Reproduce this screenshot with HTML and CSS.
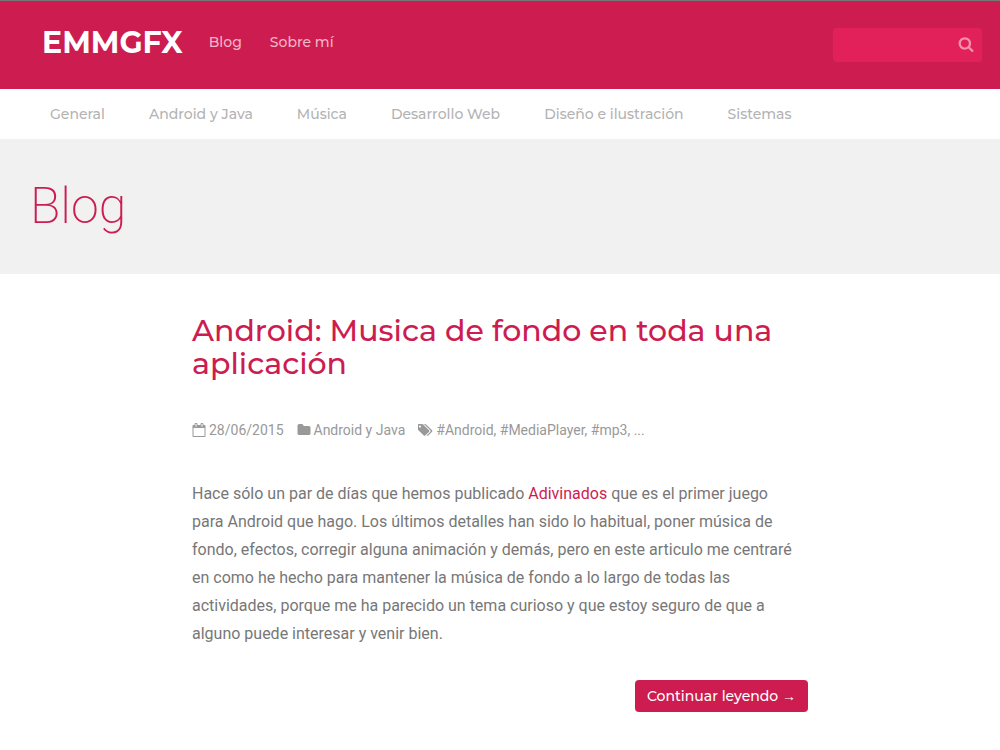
FILE: index.html
```html
<!DOCTYPE html>
<html lang="es">
<head>
<meta charset="utf-8">
<meta name="viewport" content="width=device-width, initial-scale=1">
<title>EMMGFX - Blog</title>
<link rel="stylesheet" href="styles.css">
</head>
<body>
<header class="site-header">
  <a class="brand" href="#">EMMGFX</a>
  <nav class="main-nav" aria-label="Principal">
    <a href="#">Blog</a>
    <a href="#">Sobre mí</a>
  </nav>
  <form class="search" role="search">
    <input class="search-input" type="search" aria-label="Buscar">
    <button class="search-button" type="submit" aria-label="Buscar">
      <svg class="icon" viewBox="0 0 1792 1792" aria-hidden="true"><path d="M1216 832q0-185-131.5-316.5t-316.5-131.5-316.5 131.5-131.5 316.5 131.5 316.5 316.5 131.5 316.5-131.5 131.5-316.5zm512 832q0 52-38 90t-90 38q-54 0-90-38l-343-342q-179 124-399 124-143 0-273.5-55.5t-225-150-150-225-55.5-273.5 55.5-273.5 150-225 225-150 273.5-55.5 273.5 55.5 225 150 150 225 55.5 273.5q0 220-124 399l343 343q37 37 37 90z"/></svg>
    </button>
  </form>
</header>
<nav class="category-nav" aria-label="Categorías">
  <a href="#">General</a>
  <a href="#">Android y Java</a>
  <a href="#">Música</a>
  <a href="#">Desarrollo Web</a>
  <a href="#">Diseño e ilustración</a>
  <a href="#">Sistemas</a>
</nav>
<div class="page-title"><h1>Blog</h1></div>
<main class="content">
  <article class="post">
    <h2 class="post-title"><a href="#">Android: Musica de fondo en toda una aplicación</a></h2>
    <div class="post-meta">
      <span class="meta-item">
        <svg class="icon" viewBox="0 0 1792 1792" aria-hidden="true"><path d="M192 1664h1408v-1024h-1408v1024zm384-1216v-288q0-14-9-23t-23-9h-64q-14 0-23 9t-9 23v288q0 14 9 23t23 9h64q14 0 23-9t9-23zm768 0v-288q0-14-9-23t-23-9h-64q-14 0-23 9t-9 23v288q0 14 9 23t23 9h64q14 0 23-9t9-23zm384-64v1280q0 52-38 90t-90 38h-1408q-52 0-90-38t-38-90v-1280q0-52 38-90t90-38h128v-96q0-66 47-113t113-47h64q66 0 113 47t47 113v96h384v-96q0-66 47-113t113-47h64q66 0 113 47t47 113v96h128q52 0 90 38t38 90z"/></svg>
        <time datetime="2015-06-28">28/06/2015</time>
      </span>
      <span class="meta-item">
        <svg class="icon" viewBox="0 0 1792 1792" aria-hidden="true"><path d="M1728 608v704q0 92-66 158t-158 66h-1216q-92 0-158-66t-66-158v-960q0-92 66-158t158-66h320q92 0 158 66t66 158v32h672q92 0 158 66t66 158z"/></svg>
        <a href="#">Android y Java</a>
      </span>
      <span class="meta-item">
        <svg class="icon icon-tags" viewBox="0 0 1920 1792" aria-hidden="true"><path d="M384 448q0-53-37.500-90.500t-90.500-37.500-90.500 37.500-37.500 90.500 37.500 90.500 90.500 37.500 90.500-37.500 37.500-90.500zm1067 576q0 53-37 90l-491 492q-39 37-91 37-53 0-90-37l-715-716q-38-37-64.500-101t-26.500-117v-416q0-52 38-90t90-38h416q53 0 117 26.500t102 64.500l715 714q37 39 37 91zm384 0q0 53-37 90l-491 492q-39 37-91 37-36 0-59-14t-53-45l470-470q37-37 37-90 0-52-37-91l-715-714q-38-38-102-64.500t-117-26.500h224q53 0 117 26.500t102 64.500l715 714q37 39 37 91z"/></svg>
        <span>#Android, #MediaPlayer, #mp3, ...</span>
      </span>
    </div>
    <p class="excerpt">Hace sólo un par de días que hemos publicado <a href="#">Adivinados</a> que es el primer juego para Android que hago. Los últimos detalles han sido lo habitual, poner música de fondo, efectos, corregir alguna animación y demás, pero en este articulo me centraré en como he hecho para mantener la música de fondo a lo largo de todas las actividades, porque me ha parecido un tema curioso y que estoy seguro de que a alguno puede interesar y venir bien.</p>
    <a class="read-more" href="#">Continuar leyendo <span class="arrow">→</span></a>
  </article>
</main>
</body>
</html>
```

FILE: styles.css
```css
* {
  box-sizing: border-box;
}

body {
  margin: 0;
  background: #fff;
  color: #777;
  font: 16px/28px Roboto, "Liberation Sans", sans-serif;
}

a {
  color: #cd1c50;
  text-decoration: none;
}

.icon {
  display: block;
  flex: none;
  width: 14px;
  height: 14px;
  fill: currentColor;
}

.site-header {
  display: flex;
  align-items: flex-start;
  padding: 27px 18px 27px 42px;
  border-top: 1px solid #777;
  background: #cd1c50;
  font-family: Montserrat, Inter, sans-serif;
}

.brand {
  margin-right: 26px;
  color: #fff;
  font-size: 30px;
  font-weight: 700;
  line-height: 30px;
}

.main-nav {
  display: flex;
  flex: 1;
  gap: 28px;
  font-size: 14px;
  font-weight: 500;
}

.main-nav a {
  color: #f3b5c8;
}

.search {
  display: flex;
  width: 149px;
  height: 34px;
  border-radius: 4px;
  background: #e2215b;
}

.search-input {
  flex: 1;
  min-width: 0;
  padding: 0 8px;
  border: 0;
  outline: 0;
  background: transparent;
  color: #fff;
  font: inherit;
}

.search-button {
  display: flex;
  align-items: center;
  padding: 0 8px 2px;
  border: 0;
  background: transparent;
  color: #f390ad;
}

.search-button .icon {
  width: 16px;
  height: 16px;
}

.category-nav {
  display: flex;
  flex-wrap: wrap;
  gap: 0 44px;
  padding: 11px 50px;
  font-family: Montserrat, Inter, sans-serif;
  font-size: 14px;
  font-weight: 500;
}

.category-nav a {
  color: #b3b3b3;
}

.page-title {
  padding: 32px 30px;
  background: #f1f1f1;
}

.page-title h1 {
  margin: 0;
  color: #cd1c50;
  font-size: 50px;
  font-weight: 200;
  line-height: 71px;
}

.content {
  max-width: 648px;
  margin: 0 auto;
  padding: 40px 16px;
}

.post {
  display: flex;
  flex-direction: column;
}

.post-title {
  margin: 0 0 36px;
  font: 500 30px/33px Montserrat, Inter, sans-serif;
}

.post-meta {
  display: flex;
  flex-wrap: wrap;
  gap: 0 13px;
  margin-bottom: 36px;
  color: #999;
  font-size: 14px;
}

.meta-item {
  display: flex;
  align-items: center;
  gap: 3px;
}

.meta-item a {
  color: inherit;
}

.icon-tags {
  width: 15px;
}

.excerpt {
  margin: 0 0 32px;
  padding-right: 8px;
}

.read-more {
  align-self: flex-end;
  padding: 2px 12px;
  border-radius: 4px;
  background: #cd1c50;
  color: #fff;
  font-family: Montserrat, Inter, sans-serif;
  font-size: 14px;
  font-weight: 500;
}

.arrow {
  font-family: "Liberation Sans", sans-serif;
}
```
